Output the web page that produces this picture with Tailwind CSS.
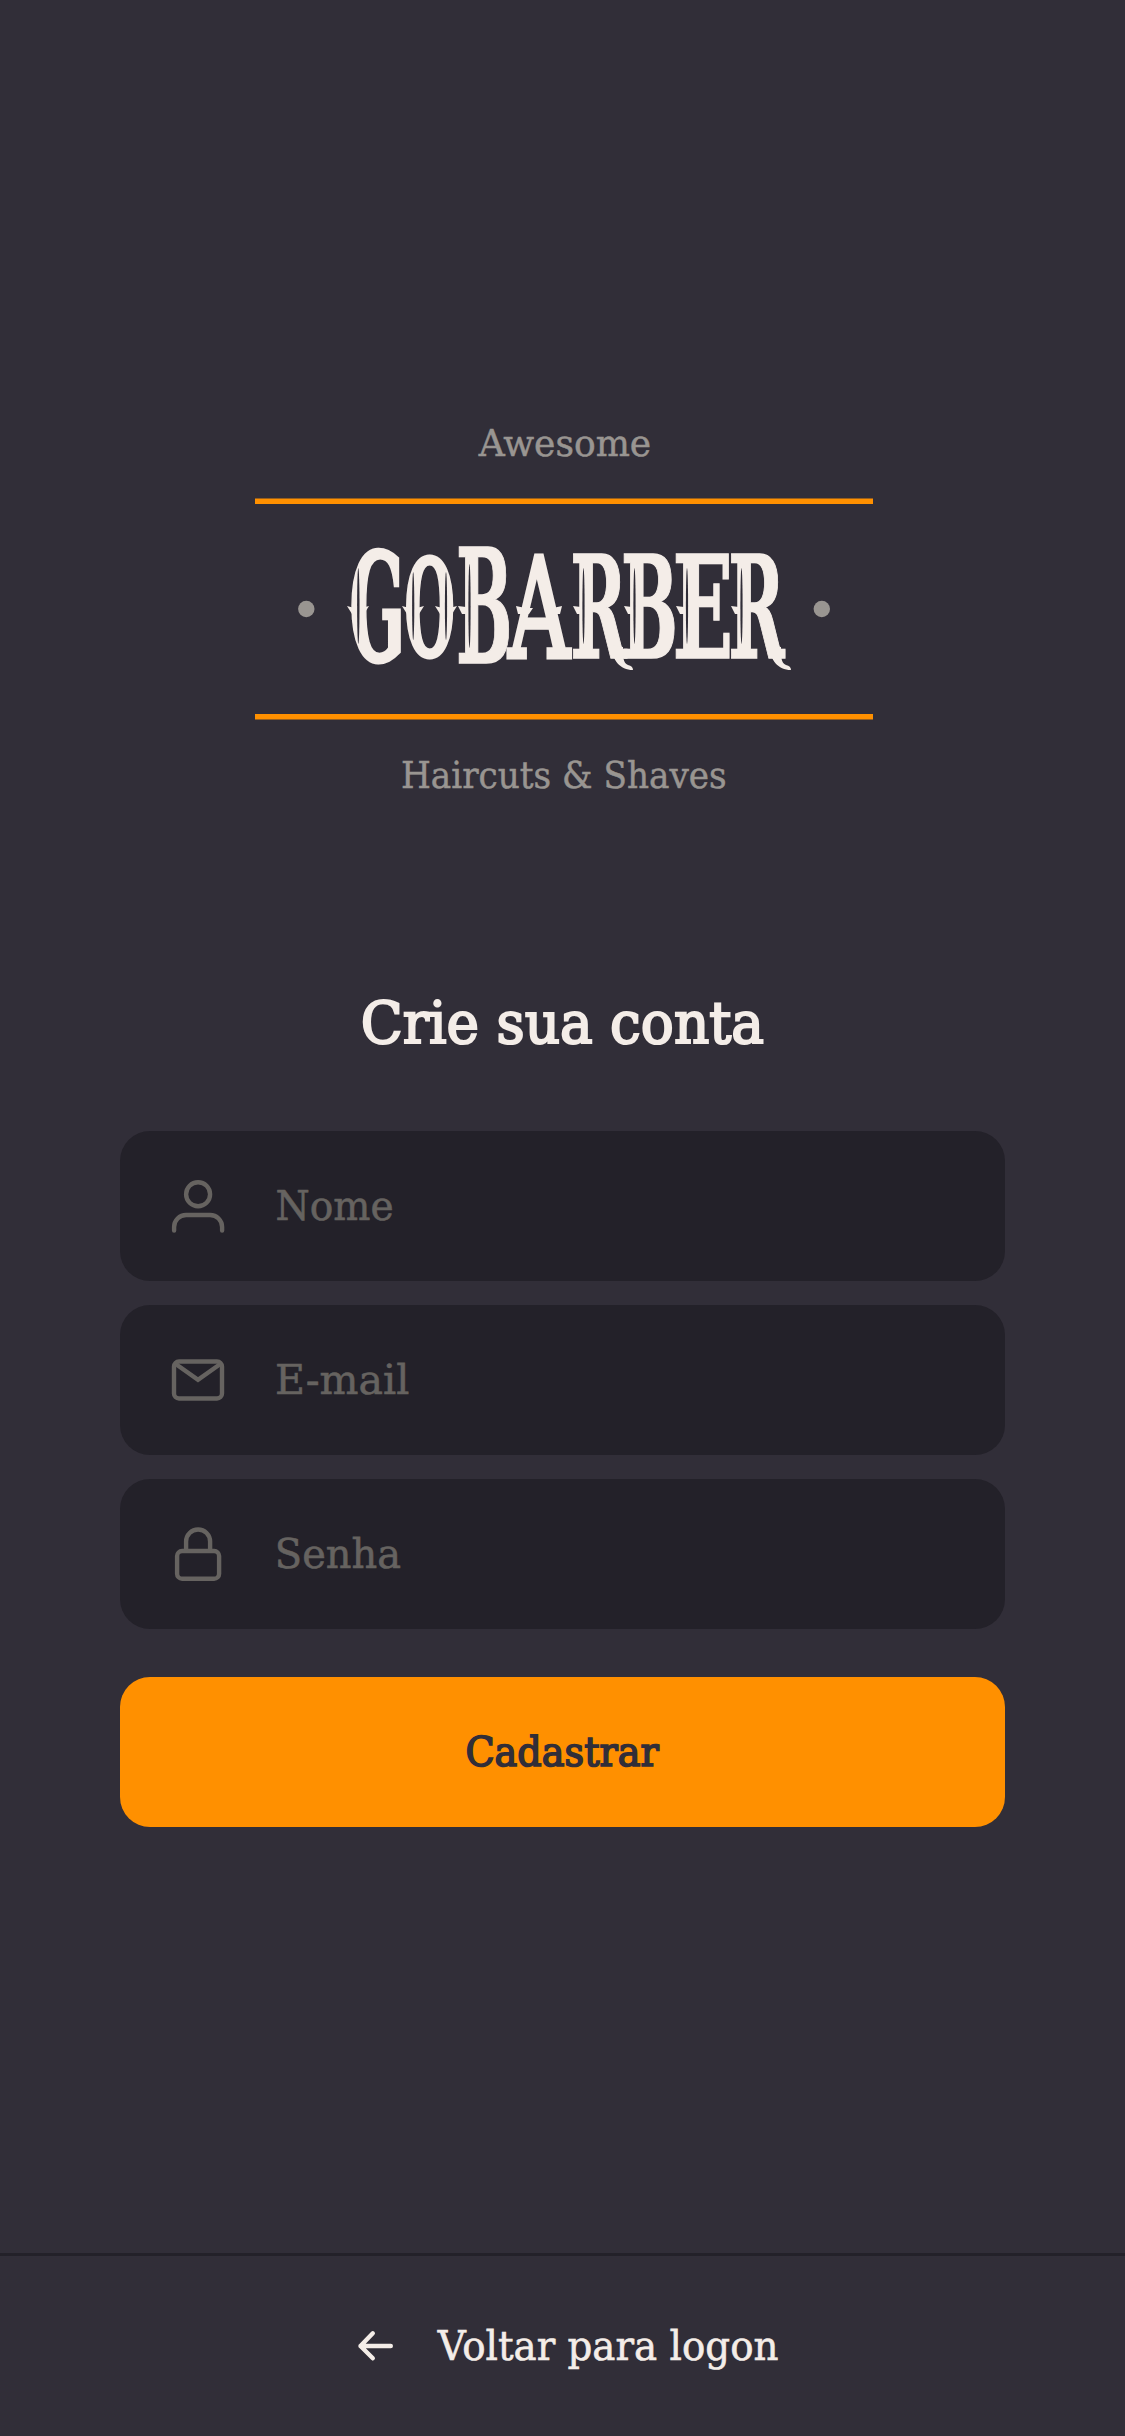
<!DOCTYPE html>
<html lang="pt-BR">
<head>
<meta charset="utf-8">
<title>GoBarber</title>
<script src="https://cdn.jsdelivr.net/npm/@tailwindcss/browser@4"></script>
</head>
<body class="bg-[#312e38]">
<div class="flex h-[2436px] w-[1125px] flex-col bg-[#312e38] font-['DejaVu_Serif',serif]">
  <main class="flex flex-1 flex-col px-[120px] pt-[400px]">
    <!-- Brand -->
    <svg class="h-[410px] w-[885px] shrink-0" viewBox="120 400 885 410" fill="#f4ede8">
      <g fill="#999591" font-size="37">
        <text x="478.8" y="455.5" stroke="#999591" stroke-width=".5" textLength="172.4" lengthAdjust="spacingAndGlyphs">Awesome</text>
        <text x="401" y="788" stroke="#999591" stroke-width=".5" textLength="325.6" lengthAdjust="spacingAndGlyphs">Haircuts &amp; Shaves</text>
        <circle cx="306.3" cy="609" r="8.2"/>
        <circle cx="821.8" cy="609" r="8.2"/>
      </g>
      <path fill="#ff9000" d="M255 498.5h618v5.6H255zM255 714h618v5.4H255z"/>
      <g font-size="142" font-weight="700" stroke="#f4ede8" stroke-width="1.6">
        <text transform="translate(349.3 661) scale(.436 1)" font-size="150.5" stroke-width="3">G</text>
        <text transform="translate(404.2 656.2) scale(.433 1)" font-size="135" stroke-width="3">O</text>
        <text transform="translate(456 663.2) scale(.421 1)" font-size="158.5">B</text>
        <text transform="translate(508.4 657) scale(.61 1)" font-size="139" font-weight="400" stroke-width="5">A</text>
        <text transform="translate(570.2 658.2) scale(.478 1)">R</text>
        <text transform="translate(621 658.2) scale(.474 1)">B</text>
        <text transform="translate(672.4 658.2) scale(.56 1)">E</text>
        <text transform="translate(728.2 658.2) scale(.478 1)">R</text>
      </g>
      <!-- spurs, swashes and engraved grooves -->
      <path d="M347 606q11 4 22 0l-5 8h-12zM402 606q11 4 22 0l-5 8h-12zM435 606q11 4 22 0l-5 8h-12zM458 606l8 1v7h-4zM516 606l9 2h8l-4 6h-11zM545 606l8 2 9-2-2 8h-11zM573 606l8 1v7h-4zM624 606l8 1v7h-4zM676 606l8 1v7h-4zM731 606l8 1v7h-4z"/>
      <path d="M611 645c1 15 9 25 22 25q0-4-5-5c-5-2-5-8-5-18zM769 645c1 15 9 25 22 25q0-4-5-5c-5-2-5-8-5-18z"/>
      <g fill="#312e38">
        <ellipse cx="358.3" cy="606" rx="1.2" ry="38"/>
        <ellipse cx="413.2" cy="606" rx="1.1" ry="34"/><ellipse cx="446" cy="606" rx="1.1" ry="34"/>
        <ellipse cx="469.5" cy="606" rx="1.1" ry="42"/><ellipse cx="583.5" cy="606" rx="1.1" ry="38"/>
        <ellipse cx="634.5" cy="606" rx="1.1" ry="38"/><ellipse cx="687" cy="606" rx="1.1" ry="38"/>
        <ellipse cx="741.5" cy="606" rx="1.1" ry="38"/>
      </g>
    </svg>

    <h1 class="mt-[170px] flex justify-center">
      <svg class="h-[90px] w-[460px]" viewBox="332.5 980 460 90" fill="#f4ede8" stroke="#f4ede8" stroke-width="2.2" font-size="58"><text x="360.3" y="1043.2" textLength="403.2" lengthAdjust="spacingAndGlyphs">Crie sua conta</text></svg>
    </h1>

    <form class="mt-[61px] flex flex-col gap-6">
      <label class="flex h-[150px] items-center rounded-[30px] bg-[#232129]">
        <svg class="h-[150px] w-[885px]" viewBox="120 1131 885 150" fill="none" stroke="#666360" stroke-width="4.4" stroke-linecap="round" stroke-linejoin="round">
          <circle cx="198.1" cy="1194.2" r="12"/><path d="M174.1 1230.5V1227a12 12 0 0 1 12-12h24a12 12 0 0 1 12 12v3.5"/>
          <text x="275.4" y="1220.2" font-size="41" fill="#666360" stroke-width=".6" textLength="118.2" lengthAdjust="spacingAndGlyphs">Nome</text>
        </svg>
      </label>
      <label class="flex h-[150px] items-center rounded-[30px] bg-[#232129]">
        <svg class="h-[150px] w-[885px]" viewBox="120 1305 885 150" fill="none" stroke="#666360" stroke-width="4.4">
          <rect x="174" y="1361.5" width="48" height="37" rx="5"/><path d="M175 1363.5l23 16.3l23-16.3"/>
          <text x="275" y="1394.4" font-size="41" fill="#666360" stroke-width=".6" textLength="134.3" lengthAdjust="spacingAndGlyphs">E-mail</text>
        </svg>
      </label>
      <label class="flex h-[150px] items-center rounded-[30px] bg-[#232129]">
        <svg class="h-[150px] w-[885px]" viewBox="120 1479 885 150" fill="none" stroke="#666360" stroke-width="4.4">
          <rect x="177.1" y="1551" width="42" height="27.7" rx="5"/><path d="M186.1 1551v-9.5a12 12 0 0 1 24 0v9.5"/>
          <text x="274.8" y="1568.4" font-size="41" fill="#666360" stroke-width=".6" textLength="126.2" lengthAdjust="spacingAndGlyphs">Senha</text>
        </svg>
      </label>
      <button type="button" class="mt-6 flex h-[150px] items-center justify-center rounded-[30px] bg-[#ff9000]">
        <svg class="h-[80px] w-[240px]" viewBox="442.5 1712 240 80" fill="#312e38" stroke="#312e38" stroke-width="1.7" font-size="40.5"><text x="464.9" y="1766.1" textLength="193.4" lengthAdjust="spacingAndGlyphs">Cadastrar</text></svg>
      </button>
    </form>
  </main>

  <footer class="flex h-[183px] shrink-0 justify-center border-t-3 border-[#232129]">
    <svg class="h-[180px] w-[480px]" viewBox="322.5 2256 480 180" fill="#f4ede8">
      <path d="M390.3 2346H360M372.3 2333.3L360 2346l12.3 12.3" fill="none" stroke="#f4ede8" stroke-width="4.4" stroke-linecap="round" stroke-linejoin="round"/>
      <text x="437.2" y="2360.4" font-size="41" stroke="#f4ede8" stroke-width=".6" textLength="340.8" lengthAdjust="spacingAndGlyphs">Voltar para logon</text>
    </svg>
  </footer>
</div>
</body>
</html>
